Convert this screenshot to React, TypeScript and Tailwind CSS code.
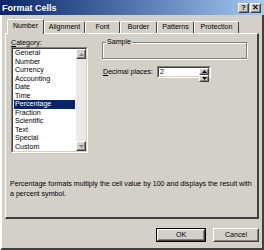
import { ReactNode } from "react";

const categories = [
  "General",
  "Number",
  "Currency",
  "Accounting",
  "Date",
  "Time",
  "Percentage",
  "Fraction",
  "Scientific",
  "Text",
  "Special",
  "Custom",
];

const tabs = [
  { label: "Number", w: "w-[37px]" },
  { label: "Alignment", w: "w-[41px]" },
  { label: "Font", w: "w-[35px]" },
  { label: "Border", w: "w-[37px]" },
  { label: "Patterns", w: "w-[37px]" },
  { label: "Protection", w: "w-[45px]" },
];

// classic raised 3d edge
function Raised({ className = "", children }: { className?: string; children?: ReactNode }) {
  return (
    <div className={`border border-t-white border-l-white border-r-[#404040] border-b-[#404040] ${className}`}>
      <div className="w-full h-full border border-t-[#d4d0c8] border-l-[#d4d0c8] border-r-[#808080] border-b-[#808080] flex items-center justify-center">
        {children}
      </div>
    </div>
  );
}

function Arrow({ down = false, color = "#000" }: { down?: boolean; color?: string }) {
  return (
    <svg width="5" height="3" viewBox="0 0 5 3">
      <path d={down ? "M0 0h5L2.5 3z" : "M0 3h5L2.5 0z"} fill={color} />
    </svg>
  );
}

function TabStrip() {
  return (
    <div className="flex items-end h-[14px] pl-[2px]">
      {tabs.map((t, i) =>
        i === 0 ? (
          <div
            key={t.label}
            className={`${t.w} h-[15px] -mb-px relative z-10 bg-[#d4d0c8] border-l border-t border-r border-t-white border-l-white border-r-[#404040] rounded-t-[2px] flex justify-center pt-[2px]`}
          >
            <span>{t.label}</span>
          </div>
        ) : (
          <div
            key={t.label}
            className={`${t.w} h-[12px] border-l border-t border-r border-t-white border-l-white border-r-[#404040] rounded-t-[2px] flex justify-center pt-[1px]`}
          >
            <span>{t.label}</span>
          </div>
        )
      )}
    </div>
  );
}

function CategoryList() {
  return (
    <div className="w-[77px] h-[106px] border border-t-[#808080] border-l-[#808080] border-r-white border-b-white">
      <div className="w-full h-full border border-t-[#404040] border-l-[#404040] border-r-[#d4d0c8] border-b-[#d4d0c8] bg-white flex">
        <div className="flex-1 pl-px pr-px">
          {categories.map((c) => (
            <div
              key={c}
              className={`h-[8.5px] leading-[8.5px] pl-px ${c === "Percentage" ? "bg-[#0a246a] text-white" : ""}`}
            >
              {c}
            </div>
          ))}
        </div>
        <div className="w-[10px] flex flex-col bg-[#ebe9e5]">
          <Raised className="w-[10px] h-[10px] bg-[#d4d0c8]">
            <Arrow color="#808080" />
          </Raised>
          <div className="flex-1" />
          <Raised className="w-[10px] h-[10px] bg-[#d4d0c8]">
            <Arrow down color="#808080" />
          </Raised>
        </div>
      </div>
    </div>
  );
}

function SpinBox() {
  return (
    <div className="w-[54px] h-[12px] border border-t-[#808080] border-l-[#808080] border-r-white border-b-white">
      <div className="w-full h-full border border-t-[#404040] border-l-[#404040] border-r-[#d4d0c8] border-b-[#d4d0c8] bg-white flex">
        <div className="flex-1 leading-[8px] pl-px">2</div>
        <div className="w-[10px] flex flex-col">
          <Raised className="flex-1 bg-[#d4d0c8]">
            <Arrow />
          </Raised>
          <Raised className="flex-1 bg-[#d4d0c8]">
            <Arrow down />
          </Raised>
        </div>
      </div>
    </div>
  );
}

export default function App() {
  return (
    <div className="w-[264px] h-[250px] bg-[#d4d0c8] flex flex-col text-black font-['Liberation_Sans',Arial,sans-serif] text-[7.1px] leading-[8px] select-none">
      {/* title bar */}
      <div className="h-[15px] bg-gradient-to-r from-[#0a246a] to-[#a6caf0] flex items-center pl-[2px] pr-[3px]">
        <span className="text-white font-bold text-[9px] leading-[10px]">Format Cells</span>
        <div className="ml-auto flex gap-px">
          <Raised className="w-[11px] h-[10px] bg-[#d4d0c8]">
            <span className="font-bold text-[8px] leading-[8px]">?</span>
          </Raised>
          <Raised className="w-[11px] h-[10px] bg-[#d4d0c8]">
            <span className="font-bold text-[8px] leading-[8px]">✕</span>
          </Raised>
        </div>
      </div>

      {/* window body */}
      <div className="flex-1 flex flex-col border-l-2 border-l-white border-r-2 border-r-[#404040] border-b-2 border-b-[#404040] pl-[3px] pr-[3px] pt-[4px]">
        <TabStrip />

        <div className="h-[186px] border-l border-t border-t-white border-l-white border-r-2 border-b-2 border-r-[#404040] border-b-[#404040] pl-[4px] pt-[5px] flex flex-col">
          <div className="flex">
            <div className="flex flex-col pl-px">
              <div className="h-[8px]">
                <span className="underline">C</span>ategory:
              </div>
              <CategoryList />
            </div>

            <div className="ml-[14px] flex flex-col">
              <div className="relative mt-[3px] w-[145px] h-[17px] border border-[#808080] shadow-[inset_1px_1px_0_#ffffff,1px_1px_0_#ffffff]">
                <span className="absolute -top-[5px] left-[3px] bg-[#d4d0c8] px-px">Sample</span>
              </div>
              <div className="mt-[7px] flex items-center">
                <span className="w-[55px] pl-px">
                  <span className="underline">D</span>ecimal places:
                </span>
                <SpinBox />
              </div>
            </div>
          </div>

          <p className="mt-[26px] leading-[10px]">
            Percentage formats multiply the cell value by 100 and displays the result with
            <br />a percent symbol.
          </p>
        </div>

        <div className="mt-[9px] flex justify-end gap-[7px]">
          <div className="border border-black">
            <Raised className="w-[48px] h-[12px] bg-[#d4d0c8]">OK</Raised>
          </div>
          <Raised className="w-[46px] h-[14px] bg-[#d4d0c8]">Cancel</Raised>
        </div>
      </div>
    </div>
  );
}
